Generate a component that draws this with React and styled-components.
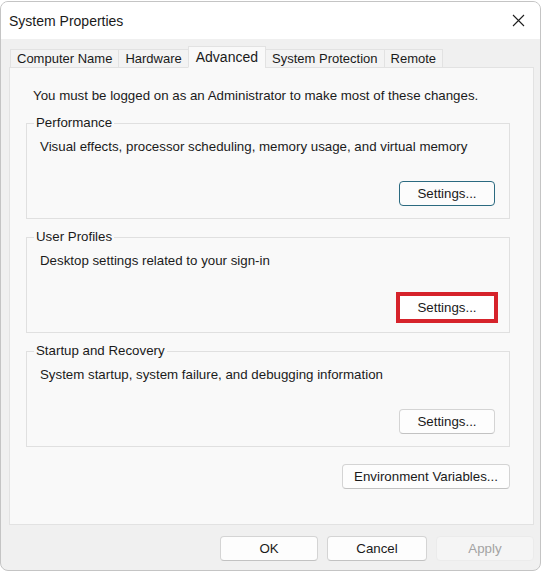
import React from "react";
import styled, { createGlobalStyle } from "styled-components";

const GlobalStyle = createGlobalStyle`
  html, body {
    margin: 0;
    padding: 0;
    background: #ffffff;
  }
  body {
    font-family: "Liberation Sans", Arial, sans-serif;
    font-size: 13.3px;
    color: #1b1b1b;
  }
`;

const Window = styled.div`
  width: 541px;
  height: 570px;
  box-sizing: border-box;
  margin-top: 1px;
  display: flex;
  flex-direction: column;
  background: #f0f0f0;
  border: 1px solid #c4c4c4;
  border-radius: 8px;
  overflow: hidden;
`;

const TitleBar = styled.div`
  height: 37px;
  display: flex;
  align-items: center;
  justify-content: space-between;
  padding: 0 10px 0 8px;
  background: #ffffff;

  h1 {
    margin: 0;
    font-size: 14px;
    font-weight: 400;
    color: #1a1a1a;
  }
`;

const CloseButton = styled.div`
  width: 24px;
  height: 24px;
  display: flex;
  align-items: center;
  justify-content: center;
`;

const Body = styled.div`
  flex: 1;
  display: flex;
  flex-direction: column;
  padding: 0 6px 0 8px;
`;

const TabRow = styled.div`
  display: flex;
  align-items: flex-end;
  margin-top: 10px;
  padding-left: 1px;
  position: relative;
  z-index: 1;
  margin-bottom: -1px;
`;

const Tab = styled.div`
  height: ${(p) => (p.$active ? 22 : 19)}px;
  box-sizing: border-box;
  padding: 0 ${(p) => (p.$active ? 7 : 6)}px;
  display: flex;
  align-items: center;
  font-size: 13px;
  color: #1a1a1a;
  background: ${(p) => (p.$active ? "#f9f9f9" : "#f3f3f3")};
  border: 1px solid #e2e2e2;
  border-bottom: ${(p) => (p.$active ? "1px solid #f9f9f9" : "1px solid #e2e2e2")};
  margin-right: -1px;
  ${(p) => (p.$active ? "font-size: 14px; margin-top: -3px;" : "")}
`;

const Panel = styled.div`
  height: 458px;
  box-sizing: border-box;
  background: #f9f9f9;
  border: 1px solid #e2e2e2;
  padding: 20px 23px 0 16px;
  display: flex;
  flex-direction: column;
`;

const Intro = styled.p`
  margin: 0 0 11px 7px;
  line-height: 16px;
`;

const Group = styled.fieldset`
  margin: 0 0 10px 0;
  padding: 8px 14px 12px 13px;
  border: 1px solid #e0e0e0;
  min-width: 0;

  legend {
    margin-left: -6px;
    padding: 0 2px;
    line-height: 16px;
    color: #1a1a1a;
  }
`;

const Description = styled.p`
  margin: 0;
  line-height: 16px;
`;

const ButtonRow = styled.div`
  display: flex;
  justify-content: flex-end;
  margin-top: ${(p) => p.$top || 0}px;
  padding-right: ${(p) => p.$inset || 0}px;
`;

const Button = styled.button`
  height: 25px;
  width: ${(p) => p.$width || 96}px;
  box-sizing: border-box;
  font-family: "Liberation Sans", Arial, sans-serif;
  font-size: 13.3px;
  color: ${(p) => (p.$disabled ? "#a3a3a3" : "#1a1a1a")};
  background: ${(p) => (p.$disabled ? "#f5f5f5" : "#fdfdfd")};
  border: 1px solid ${(p) => (p.$disabled ? "#ebebeb" : "#d4d4d4")};
  border-bottom-color: ${(p) => (p.$disabled ? "#ebebeb" : "#c2c2c2")};
  border-radius: 4px;
  padding: 0;

  ${(p) =>
    p.$default &&
    `
    border: 1.5px solid #2b6a80;
    background: #fcfcfc;
  `}

  ${(p) =>
    p.$highlight &&
    `
    border-radius: 0;
    outline: 4px solid #d6232b;
    outline-offset: -1px;
    background: #ffffff;
  `}
`;

const Footer = styled.div`
  display: flex;
  justify-content: flex-end;
  gap: 9px;
  margin-top: 11px;
`;

function Close() {
  return (
    <CloseButton>
      <svg width="13" height="13" viewBox="0 0 13 13">
        <path d="M1 1 L12 12 M12 1 L1 12" stroke="#1f1f1f" strokeWidth="1.1" />
      </svg>
    </CloseButton>
  );
}

const tabs = ["Computer Name", "Hardware", "Advanced", "System Protection", "Remote"];

export default function App() {
  return (
    <>
      <GlobalStyle />
      <Window>
        <TitleBar>
          <h1>System Properties</h1>
          <Close />
        </TitleBar>
        <Body>
          <TabRow>
            {tabs.map((t) => (
              <Tab key={t} $active={t === "Advanced"}>
                {t}
              </Tab>
            ))}
          </TabRow>
          <Panel>
            <Intro>You must be logged on as an Administrator to make most of these changes.</Intro>

            <Group>
              <legend>Performance</legend>
              <Description>Visual effects, processor scheduling, memory usage, and virtual memory</Description>
              <ButtonRow $top={26}>
                <Button $default>Settings...</Button>
              </ButtonRow>
            </Group>

            <Group>
              <legend>User Profiles</legend>
              <Description>Desktop settings related to your sign-in</Description>
              <ButtonRow $top={26}>
                <Button $highlight>Settings...</Button>
              </ButtonRow>
            </Group>

            <Group>
              <legend>Startup and Recovery</legend>
              <Description>System startup, system failure, and debugging information</Description>
              <ButtonRow $top={26}>
                <Button>Settings...</Button>
              </ButtonRow>
            </Group>

            <ButtonRow $top={7}>
              <Button $width={168}>Environment Variables...</Button>
            </ButtonRow>
          </Panel>
          <Footer>
            <Button $width={98}>OK</Button>
            <Button $width={100}>Cancel</Button>
            <Button $width={98} $disabled>
              Apply
            </Button>
          </Footer>
        </Body>
      </Window>
    </>
  );
}
